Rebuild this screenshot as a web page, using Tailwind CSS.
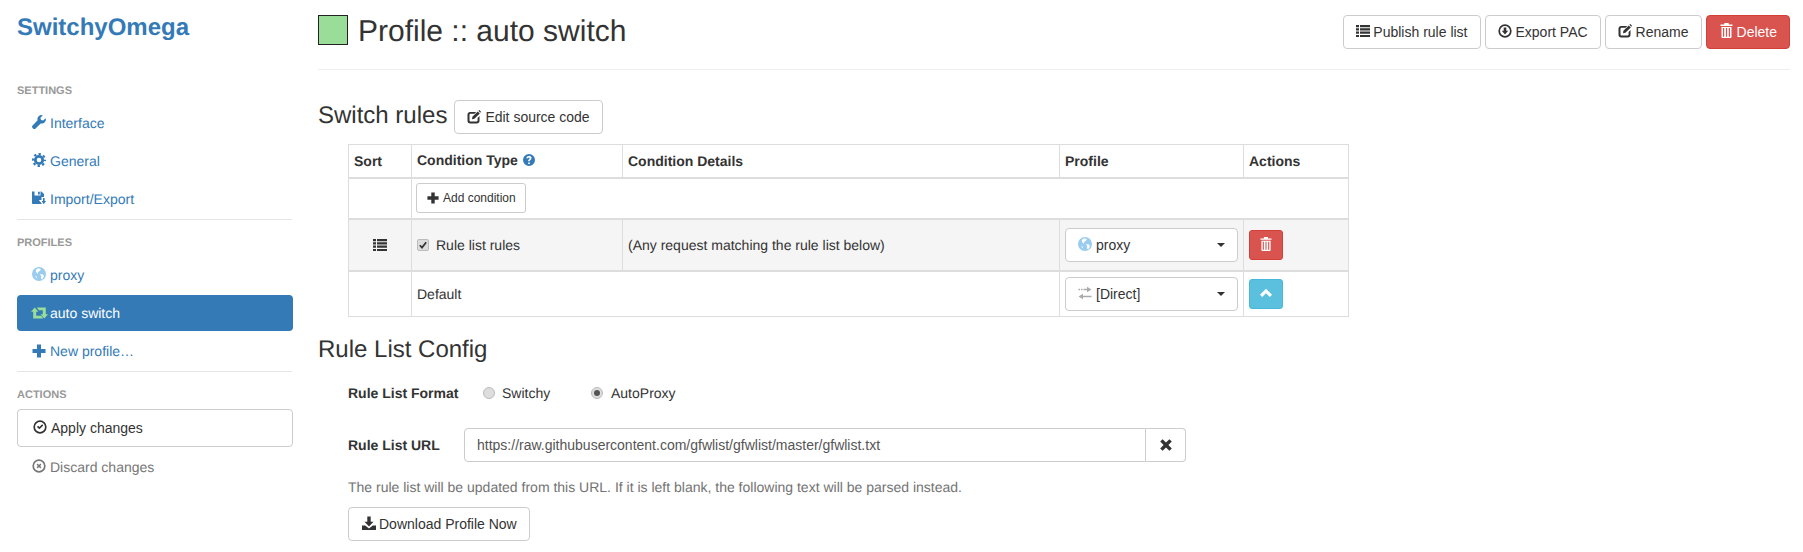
<!DOCTYPE html>
<html lang="en">
<head>
  <meta charset="UTF-8">
  <title>SwitchyOmega Options</title>
  <script src="https://cdn.jsdelivr.net/npm/@tailwindcss/browser@4"></script>
</head>
<body class="bg-white font-['Liberation_Sans',Arial,sans-serif] text-[14px] leading-[20px] text-[#333] [text-rendering:geometricPrecision]">

  <!-- icon set -->
  <svg class="hidden" xmlns="http://www.w3.org/2000/svg">
    <symbol id="i-list" viewBox="0 0 14 14"><path d="M0 1h3v2.200H0zM4 1h10v2.200H4zM0 4.300h3v2.200H0zM4 4.300h10v2.200H4zM0 7.600h3v2.200H0zM4 7.600h10v2.200H4zM0 10.900h3v2.200H0zM4 10.900h10v2.200H4z"/></symbol>
    <symbol id="i-wrench" viewBox="0 0 14 14"><path d="M13.600 3.200 11.200 5.600 9 5 8.400 2.800 10.800.4A4 4 0 0 0 5.600 5.300L.6 10.400a1.900 1.900 0 0 0 0 2.600l.4.400a1.900 1.900 0 0 0 2.600 0L8.700 8.400a4 4 0 0 0 4.900-5.200z"/></symbol>
    <symbol id="i-cog" viewBox="0 0 14 14"><circle cx="7" cy="7" r="3.700" fill="none" stroke="currentColor" stroke-width="2.800"/><circle cx="7" cy="7" r="6" fill="none" stroke="currentColor" stroke-width="2" stroke-dasharray="2.400 2.310" stroke-dashoffset="1.200"/></symbol>
    <symbol id="i-save" viewBox="0 0 14 14"><path d="M0 .5h2.500v4h6v-4h1L12 3v3H9.500v3H6.800L10 13H.8a.8.800 0 0 1-.8-.8z"/><path d="M6 .8h1.800v2.600H6zM11 7h1.600v3H14l-2.200 3.300L9.600 10H11z"/></symbol>
    <symbol id="i-globe" viewBox="0 0 14 14"><circle cx="7" cy="7" r="7"/><path fill="#fff" d="M6 1.200 8.800 2 8 4 6.200 4.800 5.600 7 4.200 5 3.800 3zM8 7l3 .6 1 1.600L10.200 12.400 9 11.500 9.200 9.200zM3 8.500 5 10 4.600 11.500z"/></symbol>
    <symbol id="i-retweet" viewBox="0 0 17 12"><path d="M3.700.5 7.400 4.700H5.200V8.800H10.200L12.200 11.500H2.200V4.700H0z"/><path d="M5.800.5H14.800V7.300H17L13.300 11.500 9.600 7.300H11.800V3.200H7.800z"/></symbol>
    <symbol id="i-plus" viewBox="0 0 14 14"><path d="M5 .5h4V5h4.500v4H9v4.500H5V9H.5V5H5z"/></symbol>
    <symbol id="i-ok" viewBox="0 0 14 14"><circle cx="7" cy="7" r="5.800" fill="none" stroke="currentColor" stroke-width="1.700"/><path d="M3.900 6.900 5.200 5.700 6.400 6.900 9.200 4.300 10.300 5.500 6.400 9.300z"/></symbol>
    <symbol id="i-remove" viewBox="0 0 14 14"><circle cx="7" cy="7" r="5.800" fill="none" stroke="currentColor" stroke-width="1.700"/><path d="M4.600 5.700 5.700 4.600 7 5.900 8.300 4.600 9.400 5.700 8.100 7 9.400 8.300 8.300 9.400 7 8.100 5.700 9.400 4.600 8.300 5.900 7z"/></symbol>
    <symbol id="i-down-c" viewBox="0 0 14 14"><circle cx="7" cy="7" r="5.800" fill="none" stroke="currentColor" stroke-width="1.700"/><path d="M5.700 3.400h2.600v3.300h1.900L7 10.400 3.800 6.700h1.900z"/></symbol>
    <symbol id="i-edit" viewBox="0 0 14 14"><path d="M2.800 2h6.400L7.500 3.800H3.400a.9.900 0 0 0-.9.900v5.800c0 .5.400.9.900.9h6.300c.5 0 .9-.4.9-.9V7.900l1.900-1.900v4.800A2.800 2.800 0 0 1 9.700 13.500H3.200A2.800 2.800 0 0 1 .5 10.800V4.300A2.500 2.500 0 0 1 2.800 2z"/><path d="M5.400 6.800 10.800 1.400 12.800 3.400 7.400 8.800 5 9.200zM11.400.8 12.300 0l1.700 1.700-.7 1z"/></symbol>
    <symbol id="i-trash" viewBox="0 0 13 15"><path d="M4.500 0h4l.5 1.500h3.500V3H.5V1.500H4z"/><path fill-rule="evenodd" d="M1.500 4h10v10c0 .6-.4 1-1 1h-8c-.6 0-1-.4-1-1zM3 5v8.800h1.200V5zm2.900 0v8.800h1.200V5zm2.900 0v8.800H10V5z"/></symbol>
    <symbol id="i-help" viewBox="0 0 14 14"><path fill-rule="evenodd" d="M7 0a7 7 0 1 1 0 14A7 7 0 0 1 7 0zM6 9.800v2h2v-2zM7 2.400C5.300 2.400 4 3.300 3.900 5.100h2c.1-.7.400-1 1-1 .5 0 .9.300.9.800 0 .4-.2.700-.7 1.100-.9.700-1.200 1.200-1.100 2.500h2c0-.8.100-1 .7-1.500.8-.6 1.300-1.300 1.300-2.300 0-1.700-1.300-2.800-3-2.800z"/></symbol>
    <symbol id="i-transfer" viewBox="0 0 14 14"><path d="M9 .8l4.500 2.700L9 6.200V4.300H5.500V2.700H9zM5 7.800v1.900h8.500v1.600H5v1.900L.5 10.500zM.5 2.700h1.500v1.600H.5zM3 2.700h1.500v1.600H3z"/></symbol>
    <symbol id="i-up" viewBox="0 0 14 14"><path d="M7 2.800 13 8.800 10.800 11 7 7.200 3.200 11 1 8.800z"/></symbol>
    <symbol id="i-x" viewBox="0 0 14 14"><path d="M3.600 1.200 7 4.600l3.400-3.400 2.400 2.400L9.400 7l3.400 3.400-2.400 2.400L7 9.400l-3.400 3.400-2.400-2.400L4.600 7 1.200 3.600z"/></symbol>
    <symbol id="i-download" viewBox="0 0 14 14"><path d="M5.300.5h3.400v5.300h2.800L7 10.500 2.500 5.800h2.800zM0 9.500h3.200L7 12.500l3.800-3H14V14H0z"/></symbol>
  </svg>

  <div class="flex">
    <!-- Sidebar -->
    <aside class="w-[276px] ml-[17px] shrink-0">
      <h1 class="text-[24px] leading-[26px] font-bold text-[#337ab7] mt-[15px]">SwitchyOmega</h1>

      <h4 class="text-[11px] leading-[14px] font-bold text-[#999] mt-[43px] mb-[7px]">SETTINGS</h4>
      <nav class="flex flex-col gap-[2px] text-[#337ab7]">
        <a href="#" class="h-[36px] pl-[15px] flex items-center gap-[4px]"><svg class="size-[14px] fill-current -mt-[2px]"><use href="#i-wrench"/></svg>Interface</a>
        <a href="#" class="h-[36px] pl-[15px] flex items-center gap-[4px]"><svg class="size-[14px] fill-current -mt-[2px]"><use href="#i-cog"/></svg>General</a>
        <a href="#" class="h-[36px] pl-[15px] flex items-center gap-[4px]"><svg class="size-[14px] fill-current -mt-[2px]"><use href="#i-save"/></svg>Import/Export</a>
      </nav>
      <div class="h-px bg-[#e5e5e5] mt-[2px] mr-[1px]"></div>

      <h4 class="text-[11px] leading-[14px] font-bold text-[#999] mt-[16px] mb-[7px]">PROFILES</h4>
      <nav class="flex flex-col gap-[2px] text-[#337ab7]">
        <a href="#" class="h-[36px] pl-[15px] flex items-center gap-[4px]"><svg class="size-[14px] fill-[#99ccee] -mt-[2px]"><use href="#i-globe"/></svg>proxy</a>
        <a href="#" class="h-[36px] pl-[14px] flex items-center gap-[2px] bg-[#337ab7] text-white rounded-[4px]"><svg class="w-[17px] h-[12px] fill-[#99dd99]"><use href="#i-retweet"/></svg>auto switch</a>
        <a href="#" class="h-[36px] pl-[15px] flex items-center gap-[4px]"><svg class="size-[14px] fill-current"><use href="#i-plus"/></svg>New profile…</a>
      </nav>
      <div class="h-px bg-[#e5e5e5] mt-[2px] mr-[1px]"></div>

      <h4 class="text-[11px] leading-[14px] font-bold text-[#999] mt-[16px] mb-[7px]">ACTIONS</h4>
      <button class="w-full h-[38px] pl-[15px] flex items-center gap-[4px] border border-[#ccc] rounded-[4px] text-[#333]"><svg class="size-[14px] fill-current -mt-[2px]"><use href="#i-ok"/></svg>Apply changes</button>
      <a href="#" class="h-[38px] mt-px pl-[15px] flex items-center gap-[4px] text-[#777]"><svg class="size-[14px] fill-current -mt-[2px]"><use href="#i-remove"/></svg>Discard changes</a>
    </aside>

    <!-- Main -->
    <main class="flex-1 ml-[25px] mr-[13px]">
      <header class="h-[70px] border-b border-[#eee] flex items-start justify-between">
        <div class="flex items-center mt-[15px] h-[30px]">
          <span class="size-[30px] bg-[#99dd99] border border-[#222]"></span>
          <h1 class="text-[30px] leading-[33px] text-[#333] ml-[10px] mt-[2px]">Profile :: auto switch</h1>
        </div>
        <div class="flex gap-[4px] mt-[15px]">
          <button class="h-[34px] px-[12px] flex items-center gap-[3px] border border-[#ccc] rounded-[4px] text-[#333]"><svg class="size-[14px] fill-current -mt-[2px]"><use href="#i-list"/></svg>Publish rule list</button>
          <button class="h-[34px] px-[12px] flex items-center gap-[4px] border border-[#ccc] rounded-[4px] text-[#333]"><svg class="size-[14px] fill-current -mt-[2px]"><use href="#i-down-c"/></svg>Export PAC</button>
          <button class="h-[34px] px-[12px] flex items-center gap-[4px] border border-[#ccc] rounded-[4px] text-[#333]"><svg class="size-[14px] fill-current -mt-[2px]"><use href="#i-edit"/></svg>Rename</button>
          <button class="h-[34px] pl-[13px] pr-[12px] flex items-center gap-[4px] border border-[#d43f3a] bg-[#d9534f] rounded-[4px] text-white"><svg class="w-[13px] h-[15px] fill-current -mt-[4px]"><use href="#i-trash"/></svg>Delete</button>
        </div>
      </header>

      <section>
        <div class="flex items-center mt-[30px] h-[34px]">
          <h2 class="text-[24px] leading-[26px] -mt-[3px]">Switch rules</h2>
          <button class="h-[34px] ml-[7px] px-[12px] flex items-center gap-[4px] border border-[#ccc] rounded-[4px] text-[#333]"><svg class="size-[14px] fill-current -mt-[1px]"><use href="#i-edit"/></svg>Edit source code</button>
        </div>

        <table class="ml-[30px] mt-[10px] w-[1000px] table-fixed border-collapse">
          <colgroup>
            <col class="w-[63px]"><col class="w-[211px]"><col class="w-[437px]"><col class="w-[184px]"><col class="w-[105px]">
          </colgroup>
          <thead>
            <tr class="h-[33px] font-bold text-left">
              <th class="border border-[#ddd] border-b-2 px-[5px]">Sort</th>
              <th class="border border-[#ddd] border-b-2 px-[5px]"><span class="flex items-center gap-[5px] -mt-[2px]">Condition Type <svg class="size-[12px] fill-[#337ab7]"><use href="#i-help"/></svg></span></th>
              <th class="border border-[#ddd] border-b-2 px-[5px]">Condition Details</th>
              <th class="border border-[#ddd] border-b-2 px-[5px]">Profile</th>
              <th class="border border-[#ddd] border-b-2 px-[5px]">Actions</th>
            </tr>
          </thead>
          <tbody>
            <tr class="h-[41px]">
              <td class="border-l border-[#ddd]"></td>
              <td colspan="4" class="border border-[#ddd] border-b-2 px-[4px]">
                <button class="h-[30px] pl-[10px] pr-[9px] flex items-center gap-[4px] border border-[#ccc] rounded-[3px] text-[12px] leading-[18px] text-[#333]"><svg class="size-[12px] fill-current"><use href="#i-plus"/></svg>Add condition</button>
              </td>
            </tr>
            <tr class="h-[52px] bg-[#f5f5f5]">
              <td class="border border-[#ddd] border-b-2 border-t-2 border-r-0 text-center"><svg class="inline-block size-[14px] fill-current -mt-[2px]"><use href="#i-list"/></svg></td>
              <td class="border border-[#ddd] border-b-2 px-[4px]">
                <label class="flex items-center gap-[7px]">
                  <span class="relative size-[12px] flex items-center justify-center ml-[1px]">
                    <input type="checkbox" checked class="appearance-none size-[12px] rounded-[2px] border border-[#bbb] bg-[#ddd]">
                    <svg class="absolute inset-[2px] size-[8px]" viewBox="0 0 8 8"><path d="M.8 4.200 3 6.600 7.200 1.200" fill="none" stroke="#333" stroke-width="1.700"/></svg>
                  </span>
                  Rule list rules
                </label>
              </td>
              <td class="border border-[#ddd] border-b-2 px-[5px]">(Any request matching the rule list below)</td>
              <td class="border border-[#ddd] border-b-2 px-[5px]">
                <button class="w-full h-[34px] pl-[12px] pr-[12px] bg-white flex items-center gap-[4px] border border-[#ccc] rounded-[4px] text-[#333]"><svg class="size-[14px] fill-[#99ccee] -mt-[2px]"><use href="#i-globe"/></svg>proxy<span class="ml-auto border-x-[4px] border-x-transparent border-t-[4px] border-t-[#333]"></span></button>
              </td>
              <td class="border border-[#ddd] border-b-2 px-[5px]">
                <button class="w-[34px] h-[30px] flex items-center justify-center bg-[#d9534f] border border-[#d43f3a] rounded-[3px] text-white"><svg class="w-[12px] h-[14px] fill-current -mt-[2px]"><use href="#i-trash"/></svg></button>
              </td>
            </tr>
            <tr class="h-[46px]">
              <td class="border border-[#ddd] border-r-0"></td>
              <td colspan="2" class="border border-[#ddd] px-[5px]">Default</td>
              <td class="border border-[#ddd] px-[5px]">
                <button class="w-full h-[34px] pl-[12px] pr-[12px] flex items-center gap-[4px] border border-[#ccc] rounded-[4px] text-[#333]"><svg class="size-[14px] fill-[#aaa] -mt-[2px]"><use href="#i-transfer"/></svg>[Direct]<span class="ml-auto border-x-[4px] border-x-transparent border-t-[4px] border-t-[#333]"></span></button>
              </td>
              <td class="border border-[#ddd] px-[5px]">
                <button class="w-[34px] h-[30px] flex items-center justify-center bg-[#5bc0de] border border-[#46b8da] rounded-[3px] text-white"><svg class="size-[14px] fill-current -mt-[2px]"><use href="#i-up"/></svg></button>
              </td>
            </tr>
          </tbody>
        </table>
      </section>

      <section>
        <h3 class="text-[24px] leading-[26px] mt-[20px]">Rule List Config</h3>

        <div class="ml-[30px]">
          <div class="flex items-center h-[20px] mt-[20px]">
            <span class="font-bold w-[135px]">Rule List Format</span>
            <label class="flex items-center gap-[7px] w-[108px]">
              <input type="radio" name="fmt" class="appearance-none size-[12px] rounded-full border border-[#bbb] bg-[#ddd]">Switchy
            </label>
            <label class="flex items-center gap-[8px]">
              <span class="relative size-[12px] flex items-center justify-center">
                <input type="radio" name="fmt" checked class="appearance-none size-[12px] rounded-full border border-[#bbb] bg-[#ddd]">
                <span class="absolute size-[6px] rounded-full bg-[#555]"></span>
              </span>
              AutoProxy
            </label>
          </div>

          <div class="flex items-center mt-[25px]">
            <span class="font-bold w-[116px] -mt-[1px]">Rule List URL</span>
            <div class="flex h-[34px] w-[722px]">
              <input type="text" value="https://raw.githubusercontent.com/gfwlist/gfwlist/master/gfwlist.txt" class="flex-1 min-w-0 px-[12px] border border-[#ccc] rounded-l-[4px] text-[#555] outline-none">
              <button class="w-[40px] border border-l-0 border-[#ccc] rounded-r-[4px] flex items-center justify-center text-[#333]"><svg class="size-[14px] fill-current"><use href="#i-x"/></svg></button>
            </div>
          </div>

          <p class="text-[#737373] mt-[15px]">The rule list will be updated from this URL. If it is left blank, the following text will be parsed instead.</p>

          <button class="h-[34px] mt-[10px] pl-[13px] pr-[12px] flex items-center gap-[3px] border border-[#ccc] rounded-[4px] text-[#333]"><svg class="size-[14px] fill-current -mt-[2px]"><use href="#i-download"/></svg>Download Profile Now</button>
        </div>
      </section>
    </main>
  </div>

</body>
</html>
